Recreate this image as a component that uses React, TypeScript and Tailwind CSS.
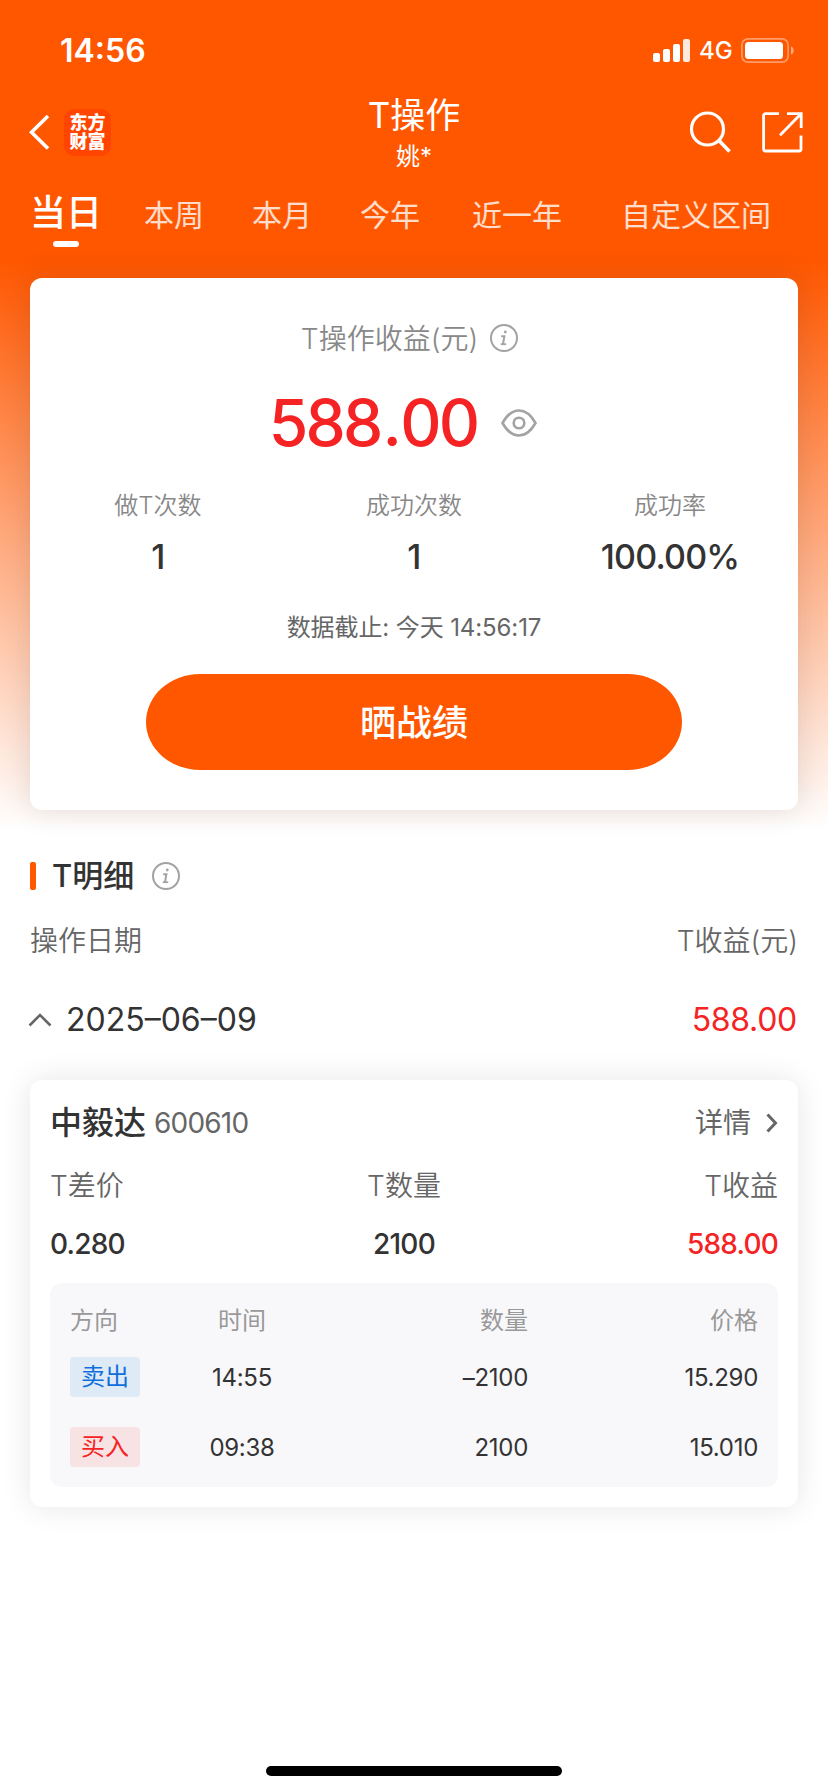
import clsx from "clsx";

const tabs = [
  { label: "本周", className: "ml-[42px]" },
  { label: "本月", className: "ml-12" },
  { label: "今年", className: "ml-12" },
  { label: "近一年", className: "ml-[52px]" },
  { label: "自定义区间", className: "ml-[59px]" },
];

const stats = [
  { label: "做T次数", value: "1" },
  { label: "成功次数", value: "1" },
  { label: "成功率", value: "100.00%" },
];

const trades = [
  { side: "卖出", time: "14:55", amount: "–2100", price: "15.290", sell: true },
  { side: "买入", time: "09:38", amount: "2100", price: "15.010", sell: false },
];

function InfoIcon() {
  return (
    <svg width="28" height="28" viewBox="0 0 28 28" fill="none" stroke="#a3a3a3">
      <circle cx="14" cy="14" r="13" strokeWidth="2" />
      <circle cx="15.3" cy="8" r="1.4" fill="#a3a3a3" stroke="none" />
      <path d="M11.2 12.2h3.2L13 20" strokeWidth="2" />
      <path d="M10.800 20.200h5.400" strokeWidth="1.8" />
    </svg>
  );
}

function StatusBar() {
  return (
    <div className="flex h-[100px] items-center pl-[60px] pr-[34px] text-white">
      <span className="pt-px text-[32px] font-semibold">14:56</span>
      <svg className="ml-auto" width="37" height="23" viewBox="0 0 37 23" fill="#fff">
        <rect y="14" width="7" height="9" rx="2" />
        <rect x="10" y="10" width="7" height="13" rx="2" />
        <rect x="20" y="5" width="7" height="18" rx="2" />
        <rect x="30" width="7" height="23" rx="2" opacity="0.88" />
      </svg>
      <span className="ml-[9px] w-8 pt-[2px] text-[24px] font-[450]">4G</span>
      <svg className="ml-[10px]" width="53" height="25" viewBox="0 0 53 25">
        <rect x="0.9" y="0.9" width="46.2" height="23.2" rx="6" fill="none" stroke="#fff" strokeWidth="1.6" opacity="0.42" />
        <rect x="4" y="4" width="38" height="17" rx="3.5" fill="#fff" />
        <path d="M50 8.5c3.6 1 3.6 7 0 8z" fill="#fff" opacity="0.5" />
      </svg>
    </div>
  );
}

function Header() {
  return (
    <div className="grid h-[80px] grid-cols-3 text-white">
      <div className="flex items-center pb-4 pl-[29px]">
        <svg width="21" height="36" viewBox="0 0 21 36" fill="none" stroke="#fff" strokeWidth="3.6">
          <path d="M19 2 2.5 18.2 19 34.5" />
        </svg>
        <div className="ml-[14px] flex h-[47px] w-[47px] flex-col items-center justify-center rounded-[10px] bg-[#ff4500] text-[18px] font-black leading-[19.5px]">
          <span>东方</span>
          <span>财富</span>
        </div>
      </div>
      <div className="flex flex-col items-center">
        <span className="mt-[-5px] text-[35px] leading-[40px]">T操作</span>
        <span className="mt-[9px] text-[24px] leading-[26px]">姚*</span>
      </div>
      <div className="flex items-center justify-end gap-[30px] pb-4 pr-[25px]">
        <svg width="43" height="42" viewBox="0 0 43 42" fill="none" stroke="#fff" strokeWidth="3.2">
          <circle cx="18.500" cy="18" r="16" />
          <path d="m30 29.500 10.500 11" strokeWidth="3.6" />
        </svg>
        <svg width="41" height="41" viewBox="0 0 41 41" fill="none" stroke="#fff" strokeWidth="2.8">
          <path d="M17 1.6H3.6a2 2 0 0 0-2 2V37a2 2 0 0 0 2 2H37a2 2 0 0 0 2-2V23.5" />
          <path d="M25 1.6h14.2V16M38.8 2 18 23.2" />
        </svg>
      </div>
    </div>
  );
}

function Tabs() {
  return (
    <div className="flex h-[98px] pl-[30px] pt-[11px] text-white">
      <div className="flex w-[72px] flex-col">
        <span className="text-[36px] font-medium leading-[44px]">当日</span>
        <span className="ml-[23px] mt-[6px] h-[6px] w-[26px] rounded-full bg-white" />
      </div>
      {tabs.map((tab) => (
        <span
          key={tab.label}
          className={clsx("mt-[2px] text-[30px] leading-[44px] text-white/80", tab.className)}
        >
          {tab.label}
        </span>
      ))}
    </div>
  );
}

function Summary() {
  return (
    <section className="mx-[30px] flex h-[532px] flex-col items-center rounded-xl bg-white shadow-[0_0_30px_rgba(60,30,20,0.14)]">
      <div className="mt-10 flex h-10 items-center gap-3 pr-[9px] text-[28px] text-[#888]">
        <span className="pt-px font-[350]">T操作收益(元)</span>
        <InfoIcon />
      </div>
      <div className="mt-[30px] flex h-[70px] items-center pr-[22px]">
        <span className="text-[64px] font-medium leading-[70px] tracking-[-2.8px] text-[#f52323]">
          588<span className="ml-[2px] mr-px">.</span>00
        </span>
        <svg className="ml-6" width="36" height="28" viewBox="0 0 36 28" fill="none" stroke="#a3a3a3" strokeWidth="2.6">
          <path d="M1.500 14C6 6 11.500 1.500 18 1.500S30 6 34.500 14C30 22 24.500 26.500 18 26.500S6 22 1.500 14Z" />
          <circle cx="18" cy="14" r="5.300" />
        </svg>
      </div>
      <div className="mt-[32px] grid w-full grid-cols-3 text-center">
        {stats.map((item) => (
          <div key={item.label}>
            <div className="text-[24px] font-[350] leading-[32px] text-[#888]">{item.label}</div>
            <div className="mt-[15px] text-[34px] font-medium leading-[40px] tracking-[-0.8px] text-[#333]">{item.value}</div>
          </div>
        ))}
      </div>
      <div className="mt-[35px] text-[24px] leading-[32px] tracking-[-0.1px] text-[#666]">数据截止: 今天 14:56:17</div>
      <button className="mt-[30px] h-24 w-[536px] rounded-[54px/48px] bg-[#ff5700] pt-[2px] text-[36px] font-medium text-white">
        晒战绩
      </button>
    </section>
  );
}

function Detail() {
  return (
    <section className="mx-[30px] mt-[40px] h-[427px] rounded-xl bg-white px-5 pt-[23px] shadow-[0_0_30px_rgba(0,0,0,0.1)]">
      <div className="flex h-10 items-center">
        <span className="text-[32px] font-medium text-[#333]">中毅达</span>
        <span className="ml-2 text-[28px] tracking-[-0.8px] text-[#666]">600610</span>
        <span className="ml-auto text-[28px] text-[#666]">详情</span>
        <svg className="ml-[15px]" width="12" height="20" viewBox="0 0 12 20" fill="none" stroke="#666" strokeWidth="3">
          <path d="m1.500 1.500 8 8.500-8 8.500" />
        </svg>
      </div>
      <div className="mt-[23px] grid grid-cols-[314px_80px_1fr] text-[28px] font-[350] leading-10 text-[#666]">
        <span>T差价</span>
        <span className="whitespace-nowrap text-center">T数量</span>
        <span className="text-right">T收益</span>
      </div>
      <div className="mt-[18px] grid grid-cols-[314px_80px_1fr] text-[28px] font-medium leading-10 tracking-[-0.8px] text-[#333]">
        <span>0.280</span>
        <span className="text-center">2100</span>
        <span className="text-right text-[#f52323]">588.00</span>
      </div>
      <div className="mt-[19px] h-[204px] rounded-xl bg-[#f8f8fb] px-5 pt-[18px]">
        <div className="grid grid-cols-[112px_120px_226px_1fr] text-[24px] leading-10 text-[#999]">
          <span>方向</span>
          <span className="text-center">时间</span>
          <span className="text-right">数量</span>
          <span className="text-right">价格</span>
        </div>
        <div className="mt-4 flex flex-col gap-[30px]">
          {trades.map((trade) => (
            <div key={trade.time} className="grid h-10 grid-cols-[112px_120px_226px_1fr] text-[24px] leading-[42px] text-[#333]">
              <span
                className={clsx(
                  "h-10 w-[70px] rounded text-center leading-10",
                  trade.sell ? "bg-[#deeaf6] text-[#0f6fdc]" : "bg-[#f8e3e4] text-[#f52323]"
                )}
              >
                {trade.side}
              </span>
              <span className="text-center tracking-[-0.3px]">{trade.time}</span>
              <span className="text-right tracking-[-0.3px]">{trade.amount}</span>
              <span className="text-right tracking-[-0.3px]">{trade.price}</span>
            </div>
          ))}
        </div>
      </div>
    </section>
  );
}

export default function App() {
  return (
    <main className="flex h-[1792px] w-[828px] flex-col overflow-hidden bg-white bg-[linear-gradient(#ff5700_260px,#ffffff_830px)] font-['Inter','Noto_Sans_CJK_SC',sans-serif]">
      <StatusBar />
      <Header />
      <Tabs />
      <Summary />

      <div className="mx-[30px] mt-[46px] flex h-10 items-center">
        <span className="h-7 w-[6px] rounded-[2px] bg-[#ff5700]" />
        <span className="ml-4 pt-px text-[31px] font-medium text-[#333]">T明细</span>
        <span className="ml-[18px]">
          <InfoIcon />
        </span>
      </div>
      <div className="mx-[30px] mt-[25px] flex h-10 items-center justify-between text-[28px] font-[350] text-[#666]">
        <span>操作日期</span>
        <span>T收益(元)</span>
      </div>
      <div className="mx-[28px] mt-[38px] flex h-[41px] items-center text-[32px]">
        <svg width="24" height="14" viewBox="0 0 24 14" fill="none" stroke="#666" strokeWidth="2.6">
          <path d="M1.500 12.500 12 2l10.500 10.500" />
        </svg>
        <span className="ml-[14px] text-[#333]">2025–06–09</span>
        <span className="ml-auto mr-[3px] tracking-[-0.3px] text-[#f52323]">588.00</span>
      </div>

      <Detail />

      <div className="mx-auto mb-4 mt-auto h-[10px] w-[296px] rounded-full bg-black" />
    </main>
  );
}
